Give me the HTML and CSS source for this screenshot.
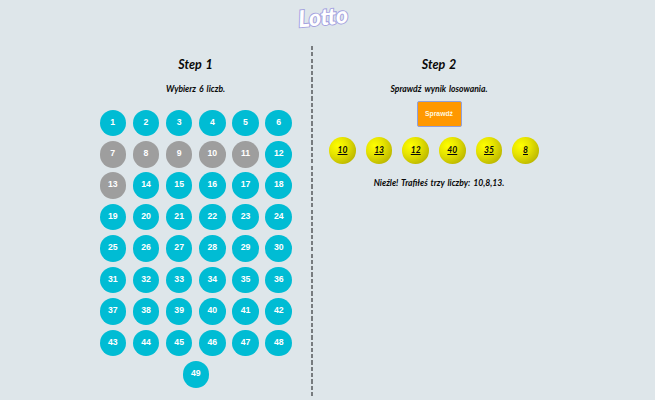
FILE: index.html
```
<!DOCTYPE html>
<html lang="pl">
<head>
<meta charset="utf-8">
<title>Lotto</title>
<link rel="stylesheet" href="styles.css">
</head>
<body>
<header><h1 class="logo">Lotto</h1></header>
<main class="steps">
<section class="step pick">
<h2>Step 1</h2>
<p class="hint">Wybierz 6 liczb.</p>
<div class="numbers" id="numbers"></div>
</section>
<div class="divider"></div>
<section class="step result">
<h2>Step 2</h2>
<p class="hint check">Sprawdź wynik losowania.</p>
<button class="button">Sprawdź</button>
<div class="balls"><span>10</span><span>13</span><span>12</span><span>40</span><span>35</span><span>8</span></div>
<p class="message">Nieźle! Trafiłeś trzy liczby: 10,8,13.</p>
</section>
</main>
<script src="script.js"></script>
</body>
</html>
```
FILE: styles.css
```
* { box-sizing: border-box; }
body {
  margin: 0;
  height: 400px;
  background: #dee6ea;
  color: #080808;
  font-family: Lato, sans-serif;
}
header { height: 46px; display: flex; justify-content: center; padding-right: 9px; }
.logo {
  margin: 0;
  height: 32px;
  line-height: 32px;
  font-size: 23px;
  font-style: italic;
  font-weight: 900;
  color: #fff;
  -webkit-text-stroke: 2px #a5a3e0;
  paint-order: stroke fill;
  transform: rotate(-5deg);
}
.steps { display: flex; height: 350px; padding-left: 80px; }
.step { width: 231px; display: flex; flex-direction: column; align-items: center; font-style: italic; white-space: nowrap; }
.result { width: 252px; }
.divider { width: 2px; background: repeating-linear-gradient(#777b7e 0 4.2px, transparent 4.2px 6.29px); }
h2 { margin: 9px 0 0; height: 20px; line-height: 20px; font-size: 12.5px; font-weight: 700; word-spacing: 1px; }
.hint { margin: 8px 0 0; height: 12px; line-height: 12px; font-size: 8.6px; font-weight: 700; word-spacing: 1.1px; }
.numbers { display: flex; flex-wrap: wrap; justify-content: center; width: 200px; margin: 14.6px 0 0 .5px; gap: 4.94px 6.7px; }
.number {
  width: 26.5px;
  height: 26.5px;
  border-radius: 50%;
  background: #00bcd4;
  color: #fff;
  font: 700 8.7px/25.6px "Liberation Sans", sans-serif;
  text-align: center;
}
.number.chosen { background: #9e9e9e; }
.button {
  width: 45px;
  height: 26px;
  margin-top: 6px;
  padding: 0;
  border: 1px solid #8f9fdc;
  border-radius: 2px;
  background: #ff9800;
  color: #fff6df;
  font: 700 6.8px/24px "Liberation Sans", sans-serif;
}
.balls { display: flex; gap: 10.1px; margin: 10px 10px 0 0; }
.balls span {
  width: 26.5px;
  height: 26.5px;
  border-radius: 50%;
  background: radial-gradient(circle at 33% 33%, #ffff00 0%, #e8e500 35%, #b5b000 85%, #a5a000 100%);
  font-size: 8.5px;
  font-weight: 700;
  line-height: 26px;
  text-align: center;
  text-decoration: underline;
}
.message { margin: 12px 0 0; height: 14px; line-height: 14px; font-size: 8.6px; font-weight: 700; word-spacing: 1.1px; }
```
FILE: script.js
```
const chosen = [7, 8, 9, 10, 11, 13];
const numbers = document.getElementById('numbers');
for (let n = 1; n <= 49; n++) {
  const item = document.createElement('div');
  item.className = chosen.includes(n) ? 'number chosen' : 'number';
  item.textContent = n;
  numbers.append(item);
}
```
